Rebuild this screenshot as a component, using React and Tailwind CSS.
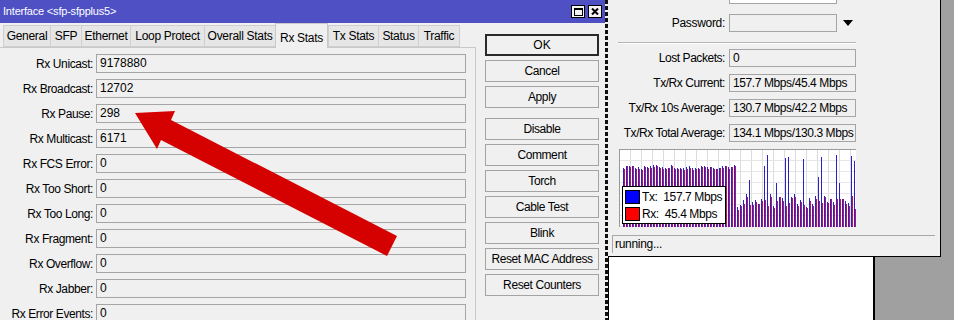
import React from 'react';

const rows = [
  ['Rx Unicast:', '9178880'],
  ['Rx Broadcast:', '12702'],
  ['Rx Pause:', '298'],
  ['Rx Multicast:', '6171'],
  ['Rx FCS Error:', '0'],
  ['Rx Too Short:', '0'],
  ['Rx Too Long:', '0'],
  ['Rx Fragment:', '0'],
  ['Rx Overflow:', '0'],
  ['Rx Jabber:', '0'],
  ['Rx Error Events:', '0'],
];

const tabs = [
  { name: 'General', w: 'w-[48px]' },
  { name: 'SFP', w: 'w-[32px]' },
  { name: 'Ethernet', w: 'w-[50px]' },
  { name: 'Loop Protect', w: 'w-[75px]' },
  { name: 'Overall Stats', w: 'w-[72px]' },
  { name: 'Rx Stats', w: 'w-[53px]', active: true },
  { name: 'Tx Stats', w: 'w-[51px]' },
  { name: 'Status', w: 'w-[41px]' },
  { name: 'Traffic', w: 'w-[42px]' },
];

const buttons = ['Cancel', 'Apply', null, 'Disable', 'Comment', 'Torch', 'Cable Test', 'Blink', 'Reset MAC Address', 'Reset Counters'];

const stats = [
  ['Lost Packets:', '0'],
  ['Tx/Rx Current:', '157.7 Mbps/45.4 Mbps'],
  ['Tx/Rx 10s Average:', '130.7 Mbps/42.2 Mbps'],
  ['Tx/Rx Total Average:', '134.1 Mbps/130.3 Mbps'],
];

function makeRng(seed) {
  let s = seed;
  return () => {
    s = (s * 9301 + 49297) % 233280;
    return s / 233280;
  };
}

const Chart = () => {
  const r = makeRng(11);
  const bars = [];
  for (let i = 0; i < 78; i++) {
    const x = 3 + i * 3;
    let tx, rx;
    if (x < 116) {
      tx = 15 + r() * 4;
      rx = tx + r() * 2;
    } else {
      rx = 46 + r() * 14;
      tx = r() < 0.45 ? 4 + r() * 30 : rx - r() * 4;
    }
    bars.push(
      <line key={'t' + i} x1={x + 0.5} x2={x + 0.5} y1={tx} y2={78} stroke="#2a22c8" />,
      <line key={'r' + i} x1={x + 1.5} x2={x + 1.5} y1={rx} y2={78} stroke="#b8145a" />
    );
  }
  const grid = [];
  for (let gx = 10; gx < 237; gx += 11) {
    grid.push(<line key={'gx' + gx} x1={gx + 0.5} x2={gx + 0.5} y1={0} y2={78} stroke="#dcdcdc" />);
  }
  for (let gy = 10; gy < 78; gy += 11) {
    grid.push(<line key={'gy' + gy} x1={0} x2={237} y1={gy + 0.5} y2={gy + 0.5} stroke="#e6e6e6" />);
  }
  return (
    <div className="relative ml-[11px] mt-[7px] w-[237px] h-[78px] bg-white border-t border-l border-[#9a9a9a]">
      <svg width="236" height="77" shapeRendering="crispEdges" className="block">
        {grid}
        {bars}
      </svg>
      {/* legend */}
      <div className="absolute left-[2px] top-[36px] w-[104px] h-[38px] bg-white border border-black flex flex-col justify-center gap-[3px] pl-[2px]">
        <div className="flex items-center gap-[2px] h-[14px]">
          <div className="w-[15px] h-[14px] bg-[#0000ff] border border-black shrink-0"></div>
          <span className="text-[12px] tracking-[-0.4px] whitespace-nowrap">Tx:&nbsp;&nbsp;157.7 Mbps</span>
        </div>
        <div className="flex items-center gap-[2px] h-[14px]">
          <div className="w-[15px] h-[14px] bg-[#ff0000] border border-black shrink-0"></div>
          <span className="text-[12px] tracking-[-0.4px] whitespace-nowrap">Rx:&nbsp;&nbsp;45.4 Mbps</span>
        </div>
      </div>
    </div>
  );
};

const App = () => {
  return (
    <div className="relative w-[954px] h-[320px] overflow-hidden bg-[#a0a0a0] flex font-['Liberation_Sans',Arial,sans-serif] text-[11px] text-black">
      {/* Interface window */}
      <div className="w-[605px] h-full flex flex-col bg-[#f0f0f0]">
        <div className="h-[23px] shrink-0 bg-[#4e50c4] flex items-center justify-between pl-[3px] pr-[3px] text-white">
          <span className="text-[11px] tracking-[-0.2px]">{'Interface <sfp-sfpplus5>'}</span>
          <div className="flex gap-[3px]">
            <div className="w-[14px] h-[13px] bg-[#f4f4f4] border border-black flex items-center justify-center">
              <svg width="9" height="8" viewBox="0 0 9 8">
                <rect x="0.5" y="0.5" width="8" height="7" fill="none" stroke="#000" />
                <rect x="0" y="0" width="9" height="2" fill="#000" />
              </svg>
            </div>
            <div className="w-[14px] h-[13px] bg-[#f4f4f4] border border-black flex items-center justify-center">
              <svg width="8" height="7" viewBox="0 0 8 7">
                <path d="M1 0.5 L7 6.5 M7 0.5 L1 6.5" stroke="#000" strokeWidth="2" />
              </svg>
            </div>
          </div>
        </div>
        <div className="flex flex-1">
          <div className="w-[476px] flex flex-col">
            {/* tabs */}
            <div className="h-[24px] flex items-end pl-[3px]">
              {tabs.map((t) =>
                t.active ? (
                  <div key={t.name} className={`${t.w} h-[25px] -mb-[1px] relative z-10 bg-[#f0f0f0] border border-b-0 border-[#c9c9c9] flex items-start justify-center pt-[5px] text-[12px] tracking-[-0.3px]`}>
                    {t.name}
                  </div>
                ) : (
                  <div key={t.name} className={`${t.w} h-[22px] bg-[#e6e6e6] border border-[#cfcfcf] -mr-[1px] flex items-center justify-center text-[12px] tracking-[-0.3px]`}>
                    {t.name}
                  </div>
                )
              )}
            </div>
            {/* page */}
            <div className="flex-1 border-t border-r border-[#c9c9c9] pt-[6px] flex flex-col gap-[6px]">
              {rows.map(([label, value]) => (
                <div key={label} className="flex items-center h-[19px]">
                  <div className="w-[93px] text-right text-[12px] tracking-[-0.4px] whitespace-nowrap">{label}</div>
                  <div className="ml-[3px] w-[370px] h-[19px] border border-[#a5a5a5] bg-[#f0f0f0] pl-[3px] leading-[17px] text-[12px]">{value}</div>
                </div>
              ))}
            </div>
          </div>
          {/* buttons */}
          <div className="ml-[9px] pt-[11px] w-[114px] flex flex-col gap-[4px]">
            <div className="h-[22px] border-2 border-[#2a2a2a] bg-[#f0f0f0] flex items-center justify-center text-[12px]">OK</div>
            {buttons.map((b, i) =>
              b === null ? (
                <div key={'sp' + i} className="h-[2px]"></div>
              ) : (
                <div key={b} className="h-[22px] border border-[#a3a3a3] bg-[#f0f0f0] flex items-center justify-center text-[12px] tracking-[-0.4px] whitespace-nowrap">
                  {b}
                </div>
              )
            )}
          </div>
        </div>
      </div>

      {/* dashed border */}
      <div className="w-[3px] h-full bg-[repeating-linear-gradient(to_bottom,#111_0px,#111_4px,#f0f0f0_4px,#f0f0f0_6px)]"></div>

      {/* right windows */}
      <div className="flex flex-col">
        <div className="w-[333px] h-[257px] bg-[#f0f0f0] border-r border-b border-black flex flex-col">
          <div className="flex items-center h-[18px] -mt-[14px]">
            <div className="w-[117px] text-right text-[12px] tracking-[-0.3px]">User:</div>
            <div className="ml-[4px] w-[108px] h-[18px] border border-[#a5a5a5] bg-white pl-[3px] leading-[16px] text-[12px]">admin</div>
          </div>
          <div className="flex items-center h-[18px] mt-[10px]">
            <div className="w-[117px] text-right text-[12px] tracking-[-0.3px]">Password:</div>
            <div className="ml-[4px] w-[108px] h-[18px] border border-[#a5a5a5] bg-[#f0f0f0]"></div>
            <svg width="10" height="6" viewBox="0 0 10 6" className="ml-[6px]">
              <path d="M0 0 L10 0 L5 6 Z" fill="#000" />
            </svg>
          </div>
          <div className="ml-[10px] mt-[10px] w-[238px] h-[2px] border-t border-[#b4b4b4] border-b border-b-white"></div>
          <div className="flex flex-col gap-[7px] mt-[5px]">
            {stats.map(([label, value]) => (
              <div key={label} className="flex items-center h-[18px]">
                <div className="w-[117px] text-right text-[12px] tracking-[-0.45px] whitespace-nowrap">{label}</div>
                <div className="ml-[4px] w-[127px] h-[18px] border border-[#a5a5a5] bg-[#f0f0f0] pl-[3px] leading-[16px] text-[12px] tracking-[-0.4px] whitespace-nowrap overflow-hidden">{value}</div>
              </div>
            ))}
          </div>
          <Chart />
          <div className="ml-[4px] mt-[8px] w-[323px] border-t border-[#a8a8a8]"></div>
          <div className="ml-[4px] w-[323px] h-[17px] border-l border-[#a8a8a8] pl-[2px] leading-[17px] text-[12px] tracking-[-0.3px]">running...</div>
        </div>
        <div className="w-[267px] flex-1 bg-white border-l border-r-2 border-black"></div>
      </div>

      {/* red arrow overlay */}
      <svg width="954" height="320" className="absolute left-0 top-0 pointer-events-none">
        <polygon points="135,113 175,111 171,120 397,236 387,256 161,140 157,149" fill="#d50000" />
      </svg>
    </div>
  );
};

export default App;
